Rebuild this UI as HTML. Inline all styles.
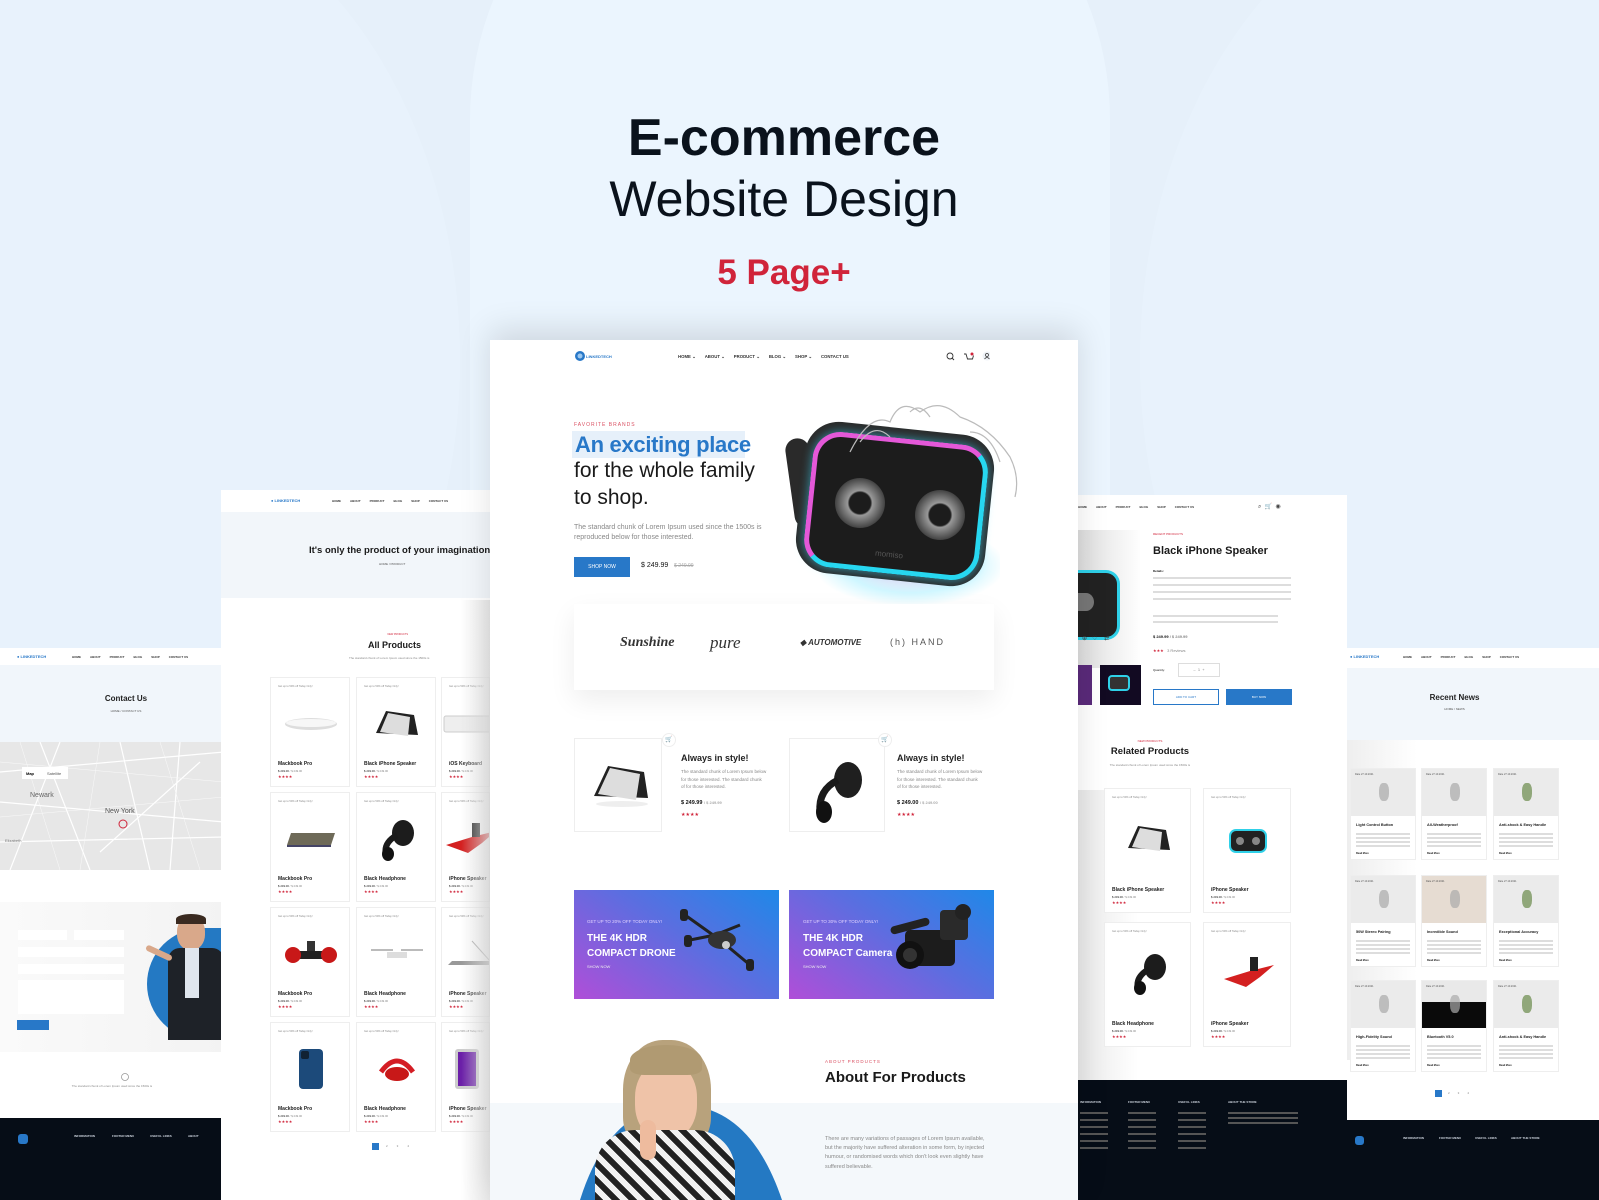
<!DOCTYPE html>
<html style="width:1599px;height:1200px;overflow:hidden"><head><meta charset="utf-8">
<style>
*{margin:0;padding:0;box-sizing:border-box}
html,body{width:1599px;height:1200px;overflow:hidden}
body{position:relative;background:#e6f0fa;font-family:"Liberation Sans",sans-serif;color:#111}
.a{position:absolute}
.pg{position:absolute;background:#fff;overflow:hidden}
.nav{position:absolute;font-size:4px;color:#333;white-space:nowrap;font-weight:bold}
.nav span{margin-right:9px}
.t{position:absolute;white-space:nowrap}
.gray{color:#888}
.red{color:#d0243a}
.card{position:absolute;background:#fff;border:1px solid #eee}
.stars{color:#d0243a;letter-spacing:0}
.foot{position:absolute;background:#060d17;color:#cfd6e0}
#bg{position:absolute;left:0;top:0;width:1599px;height:1200px;overflow:hidden}
</style></head><body>
<div id="bg">
<div class="a" style="left:470px;top:-200px;width:640px;height:1400px;border-radius:320px;background:#ebf5fe"></div>
<div class="a" style="left:-260px;top:-120px;width:720px;height:960px;border-radius:50%;background:#e8f2fc"></div>
<div class="a" style="left:1140px;top:-120px;width:720px;height:960px;border-radius:50%;background:#e8f2fc"></div>
</div>

<div class="t" style="left:0;width:1568px;text-align:center;top:108px;font-size:52px;font-weight:bold;color:#0a121c">E-commerce</div>
<div class="t" style="left:0;width:1568px;text-align:center;top:170px;font-size:50px;color:#0a121c">Website Design</div>
<div class="t" style="left:0;width:1568px;text-align:center;top:253px;font-size:35px;font-weight:bold;color:#d0243a">5 Page+</div>

<!-- far-left contact page -->
<div class="pg" style="left:0;top:648px;width:224px;height:552px">
  <div class="t" style="left:17px;top:6px;font-size:4px;color:#2878c8;font-weight:bold">● LINKEDTECH</div>
  <div class="nav" style="left:72px;top:7px;font-size:3px"><span>HOME</span><span>ABOUT</span><span>PRODUCT</span><span>BLOG</span><span>SHOP</span><span>CONTACT US</span></div>
  <div class="a" style="left:0;top:17px;width:224px;height:77px;background:#f1f6fb"></div>
  <div class="t" style="left:0;width:252px;text-align:center;top:46px;font-size:8px;font-weight:bold;color:#222">Contact Us</div>
  <div class="t" style="left:0;width:252px;text-align:center;top:61px;font-size:3px;color:#555">HOME / CONTACT US</div>
  <div class="a" style="left:0;top:94px;width:224px;height:128px;background:#e7e7e7">
    <svg width="224" height="128"><g stroke="#fff" stroke-width="1.2" fill="none"><path d="M0 30 L224 10M0 60 L224 80M40 0 L90 128M120 0 L150 128M180 0 L170 128M0 100 L224 95M60 0 L10 128M200 20 L100 110"/></g><g stroke="#fafafa" stroke-width=".5"><path d="M0 20 L224 40M0 75 L224 55M20 0 L60 128M100 0 L80 128M160 0 L200 128"/></g><rect x="22" y="25" width="46" height="12" fill="#fff"/><text x="26" y="33" font-size="4" font-weight="bold">Map</text><text x="47" y="33" font-size="4" fill="#555">Satellite</text><text x="30" y="55" font-size="7" fill="#666">Newark</text><text x="105" y="71" font-size="7" fill="#555">New York</text><text x="5" y="100" font-size="4" fill="#777">Elizabeth</text><circle cx="123" cy="82" r="4" fill="none" stroke="#d0243a"/></svg>
  </div>
  <div class="a" style="left:0;top:254px;width:224px;height:150px;background:linear-gradient(90deg,#fafafa,#f3f3f3)"></div>
  <div class="a" style="left:18px;top:282px;width:49px;height:10px;background:#fff"></div>
  <div class="a" style="left:74px;top:282px;width:50px;height:10px;background:#fff"></div>
  <div class="a" style="left:18px;top:299px;width:106px;height:10px;background:#fff"></div>
  <div class="a" style="left:18px;top:316px;width:106px;height:10px;background:#fff"></div>
  <div class="a" style="left:18px;top:332px;width:106px;height:34px;background:#fff"></div>
  <div class="a" style="left:17px;top:372px;width:32px;height:10px;background:#2878c8"></div>
  <div class="a" style="left:147px;top:280px;width:77px;height:112px;border-radius:56px 0 0 56px;background:#2479c3"></div>
  <div class="a" style="left:177px;top:268px;width:28px;height:34px;border-radius:45%;background:#d9a88a"></div>
  <div class="a" style="left:176px;top:266px;width:30px;height:10px;border-radius:50% 50% 0 0;background:#3a2a20"></div>
  <div class="a" style="left:168px;top:300px;width:56px;height:92px;border-radius:12px 12px 0 0;background:#1e2228"></div>
  <div class="a" style="left:185px;top:300px;width:14px;height:50px;background:#dfe6ee"></div>
  <div class="a" style="left:145px;top:302px;width:28px;height:6px;transform:rotate(25deg);background:#d9a88a;border-radius:3px"></div>
  <svg class="a" style="left:120px;top:424px" width="10" height="10"><circle cx="5" cy="5" r="3.5" fill="none" stroke="#999" stroke-width=".8"/></svg>
  <div class="t gray" style="left:0;width:224px;text-align:center;top:436px;font-size:3px">The standard chunk of Lorem Ipsum used since the 1500s is</div>
  <div class="foot" style="left:0;top:470px;width:224px;height:82px">
    <div class="a" style="left:18px;top:16px;width:10px;height:10px;background:#2878c8;border-radius:3px"></div>
    <div class="t" style="left:74px;top:16px;font-size:3px;font-weight:bold">INFORMATION</div>
    <div class="t" style="left:112px;top:16px;font-size:3px;font-weight:bold">FOOTER MENU</div>
    <div class="t" style="left:150px;top:16px;font-size:3px;font-weight:bold">USEFUL LINKS</div>
    <div class="t" style="left:188px;top:16px;font-size:3px;font-weight:bold">ABOUT</div>
  </div>
</div>

<!-- far-right news page -->
<div class="pg" id="np" style="left:1347px;top:648px;width:252px;height:552px">
  <div class="t" style="left:3px;top:6px;font-size:4px;color:#2878c8;font-weight:bold">● LINKEDTECH</div>
  <div class="nav" style="left:56px;top:7px;font-size:3px"><span>HOME</span><span>ABOUT</span><span>PRODUCT</span><span>BLOG</span><span>SHOP</span><span>CONTACT US</span></div>
  <div class="a" style="left:0;top:20px;width:252px;height:72px;background:#f1f6fb"></div>
  <div class="t" style="left:0;width:215px;text-align:center;top:45px;font-size:8px;font-weight:bold;color:#222">Recent News</div>
  <div class="t" style="left:0;width:215px;text-align:center;top:59px;font-size:3px;color:#555">HOME / NEWS</div>
  <div class="a" style="left:0;top:92px;width:70px;height:320px;background:linear-gradient(90deg,#eee,#fff)"></div>
</div>

<!-- left product page -->
<div class="pg" id="lp" style="left:221px;top:490px;width:269px;height:710px">
  <div class="t" style="left:50px;top:8px;font-size:4px;color:#2878c8;font-weight:bold">● LINKEDTECH</div>
  <div class="nav" style="left:111px;top:9px;font-size:3px"><span>HOME</span><span>ABOUT</span><span>PRODUCT</span><span>BLOG</span><span>SHOP</span><span>CONTACT US</span></div>
  <div class="a" style="left:0;top:22px;width:269px;height:86px;background:#f2f6fa"></div>
  <div class="t" style="left:88px;top:55px;font-size:9.5px;font-weight:bold;color:#1a1a1a">It's only the product of your imagination</div>
  <div class="t" style="left:158px;top:72px;font-size:3px;color:#555">HOME / PRODUCT</div>
  <div class="t red" style="left:0;width:269px;text-align:right;padding-right:82px;top:143px;font-size:2.5px">NEW PRODUCTS</div>
  <div class="t" style="left:147px;top:150px;font-size:9px;font-weight:bold;color:#1a1a1a">All Products</div>
  <div class="t gray" style="left:128px;top:166px;font-size:3px">The standard chunk of Lorem Ipsum used since the 1500s is</div>
</div>

<!-- right detail page -->
<div class="pg" id="rp" style="left:1078px;top:495px;width:269px;height:705px">
  <div class="nav" style="left:0;top:10px;font-size:3px"><span>HOME</span><span>ABOUT</span><span>PRODUCT</span><span>BLOG</span><span>SHOP</span><span>CONTACT US</span></div>
  <div class="t" style="left:180px;top:8px;font-size:6px;color:#444">⌕ &nbsp;🛒&nbsp; ◉</div>
  <div class="a" style="left:0;top:35px;width:63px;height:138px;background:linear-gradient(90deg,#ddd,#fff)"></div>
  <div class="a" style="left:0;top:75px;width:42px;height:70px;border-radius:0 14px 14px 0;background:#222;border:3px solid #2fd0e8;border-left:0"></div>
  <div class="a" style="left:0;top:98px;width:16px;height:18px;border-radius:0 50% 50% 0;background:#777"></div>
  <div class="t" style="left:4px;top:140px;font-size:6px;color:#444">⊕ &nbsp; ♡ &nbsp;&nbsp; ⇄</div>
  <div class="a" style="left:0;top:170px;width:14px;height:40px;background:#5a2a7a"></div>
  <div class="a" style="left:22px;top:170px;width:41px;height:40px;background:#120a22"></div>
  <div class="a" style="left:30px;top:180px;width:22px;height:16px;border:2px solid #2fd0e8;border-radius:4px;background:#333"></div>
  <div class="t red" style="left:75px;top:37px;font-size:3px">RECENT PRODUCTS</div>
  <div class="t" style="left:75px;top:50px;font-size:11px;font-weight:bold;color:#1a1a1a">Black iPhone Speaker</div>
  <div class="t" style="left:75px;top:74px;font-size:3px;font-weight:bold">Details:</div>
  <div class="a" style="left:75px;top:82px;width:138px;height:2px;background:#ddd;box-shadow:0 7px 0 #ddd,0 14px 0 #ddd,0 21px 0 #ddd"></div>
  <div class="a" style="left:75px;top:120px;width:125px;height:2px;background:#ddd;box-shadow:0 6px 0 #ddd"></div>
  <div class="t" style="left:75px;top:139px;font-size:4px;font-weight:bold">$ 249.99 <span class="gray">/ $ 249.99</span></div>
  <div class="t stars" style="left:75px;top:153px;font-size:4px">★★★ <span class="gray">&nbsp; 3 Reviews</span></div>
  <div class="t" style="left:75px;top:173px;font-size:3px">Quantity:</div>
  <div class="a" style="left:100px;top:168px;width:42px;height:14px;border:1px solid #ddd;font-size:4px;color:#888;text-align:center;line-height:12px">–&nbsp; 1 &nbsp;+</div>
  <div class="a" style="left:75px;top:194px;width:66px;height:16px;border:1px solid #2878c8;font-size:3px;color:#2878c8;text-align:center;line-height:14px">ADD TO CART</div>
  <div class="a" style="left:148px;top:194px;width:66px;height:16px;background:#2878c8;font-size:3px;color:#fff;text-align:center;line-height:16px">BUY NOW</div>
  <div class="t red" style="left:0;width:144px;text-align:center;top:244px;font-size:3px">NEW PRODUCTS</div>
  <div class="t" style="left:0;width:144px;text-align:center;top:251px;font-size:9.5px;font-weight:bold;color:#1a1a1a">Related Products</div>
  <div class="t gray" style="left:0;width:144px;text-align:center;top:268px;font-size:3px">The standard chunk of Lorem Ipsum used since the 1500s is</div>
  <div class="a" style="left:0;top:295px;width:60px;height:290px;background:linear-gradient(90deg,#e9e9e9,#fff)"></div>
  <div class="foot" style="left:0;top:585px;width:269px;height:120px">
    <div class="t" style="left:2px;top:20px;font-size:3px;font-weight:bold">INFORMATION</div>
    <div class="t" style="left:50px;top:20px;font-size:3px;font-weight:bold">FOOTER MENU</div>
    <div class="t" style="left:100px;top:20px;font-size:3px;font-weight:bold">USEFUL LINKS</div>
    <div class="t" style="left:150px;top:20px;font-size:3px;font-weight:bold">ABOUT THE STORE</div>
    <div class="a" style="left:2px;top:32px;width:28px;height:2px;background:#555;box-shadow:0 7px 0 #555,0 14px 0 #555,0 21px 0 #555,0 28px 0 #555,0 35px 0 #555,48px 0 0 #555,48px 7px 0 #555,48px 14px 0 #555,48px 21px 0 #555,48px 28px 0 #555,48px 35px 0 #555,98px 0 0 #555,98px 7px 0 #555,98px 14px 0 #555,98px 21px 0 #555,98px 28px 0 #555,98px 35px 0 #555"></div>
    <div class="a" style="left:150px;top:32px;width:70px;height:2px;background:#555;box-shadow:0 5px 0 #555,0 10px 0 #555"></div>
  </div>
</div>

<!-- center page -->
<div class="pg" style="left:490px;top:340px;width:588px;height:860px;box-shadow:0 -10px 30px rgba(0,0,0,.12)">
  <svg class="a" style="left:84px;top:10px" width="12" height="12"><circle cx="6" cy="6" r="5" fill="#2878c8"/><circle cx="6" cy="6" r="2.5" fill="#9cc8f0"/></svg>
  <div class="t" style="left:96px;top:14px;font-size:4px;color:#2878c8;font-weight:bold">LINKEDTECH</div>
  <div class="nav" style="left:188px;top:14px;font-size:4.3px;color:#333"><span>HOME ⌄</span><span>ABOUT ⌄</span><span>PRODUCT ⌄</span><span>BLOG ⌄</span><span>SHOP ⌄</span><span>CONTACT US</span></div>
  <svg class="a" style="left:455px;top:11px" width="45" height="12"><circle cx="5" cy="5" r="3" fill="none" stroke="#333" stroke-width=".9"/><path d="M7 7 L9 9" stroke="#333"/><path d="M19 3 h2 l1.5 5 h5 l1 -3.5" fill="none" stroke="#333" stroke-width=".9"/><circle cx="27" cy="3" r="1.5" fill="#d0243a"/><circle cx="42" cy="5" r="4.5" fill="#eef2f7"/><circle cx="42" cy="4" r="1.5" fill="none" stroke="#333" stroke-width=".7"/><path d="M39.5 8 q2.5 -3 5 0" fill="none" stroke="#333" stroke-width=".7"/></svg>
  <div class="t red" style="left:84px;top:82px;font-size:5px;letter-spacing:1px;opacity:.8">FAVORITE BRANDS</div>
  <div class="a" style="left:82px;top:91px;width:173px;height:27px;background:#e6f0fa"></div>
  <div class="t" style="left:85px;top:92px;font-size:22px;color:#2878c8;font-weight:bold;letter-spacing:-.3px">An exciting place</div>
  <div class="t" style="left:84px;top:119px;font-size:21px;color:#1a1a1a">for the whole family</div>
  <div class="t" style="left:84px;top:146px;font-size:21px;color:#1a1a1a">to shop.</div>
  <div class="t gray" style="left:84px;top:183px;font-size:7px;line-height:10px">The standard chunk of Lorem Ipsum used since the 1500s is<br>reproduced below for those interested.</div>
  <div class="a" style="left:84px;top:217px;width:56px;height:20px;background:#2878c8;color:#fff;font-size:5px;text-align:center;line-height:20px">SHOP NOW</div>
  <div class="t" style="left:151px;top:222px;font-size:7px">$ 249.99 &nbsp; <span style="color:#aaa;font-size:5px;text-decoration:line-through">$ 249.99</span></div>
  <div class="a" style="left:330px;top:200px;width:180px;height:64px;background:radial-gradient(ellipse at 50% 40%,rgba(255,150,220,.5),rgba(120,230,255,.35) 50%,rgba(255,255,255,0) 75%)"></div>
  <div class="a" style="left:300px;top:98px;width:24px;height:90px;border-radius:12px;background:#2a2a2a;transform:rotate(-8deg)"></div>
  <div class="a" style="left:310px;top:88px;width:190px;height:152px;border-radius:34px;background:#2b2b2b;transform:rotate(6deg)"></div>
  <div class="a" style="left:318px;top:98px;width:176px;height:136px;border-radius:28px;background:#1c1c1c;border:5px solid;border-color:#e458d8 #27d7f0 #27d7f0 #e458d8;transform:rotate(6deg);box-shadow:0 0 10px rgba(60,220,255,.6)"></div>
  <div class="a" style="left:345px;top:138px;width:50px;height:50px;border-radius:50%;background:radial-gradient(circle,#1c1c1c 30%,#999 35%,#444 70%)"></div>
  <div class="a" style="left:425px;top:150px;width:50px;height:50px;border-radius:50%;background:radial-gradient(circle,#1c1c1c 30%,#999 35%,#444 70%)"></div>
  <div class="t" style="left:385px;top:210px;font-size:8px;color:#555;transform:rotate(6deg)">momiso</div>
  <svg class="a" style="left:340px;top:52px" width="200" height="110"><g fill="none" stroke="#bbb" stroke-width="1.2"><path d="M20 60 q20 -40 40 -30 q10 -25 30 -10 q20 -15 40 5 q30 10 50 40 q10 20 5 40"/><path d="M30 50 q15 -20 30 -5 M80 20 q10 -10 20 5 M140 40 q20 0 30 30"/></g></svg>
  <div class="a" style="left:84px;top:264px;width:420px;height:86px;background:#fff;box-shadow:0 10px 25px rgba(0,0,0,.07)"></div>
  <div class="t" style="left:130px;top:295px;font-size:14px;font-style:italic;font-family:'Liberation Serif',serif;font-weight:bold;color:#333">Sunshine</div>
  <div class="t" style="left:220px;top:293px;font-size:17px;font-style:italic;font-family:'Liberation Serif',serif;color:#333">pure</div>
  <div class="t" style="left:310px;top:298px;font-size:8px;font-style:italic;font-weight:bold;color:#333">◆ AUTOMOTIVE</div>
  <div class="t" style="left:400px;top:297px;font-size:9px;color:#555;letter-spacing:2px">(h) HAND</div>
  <div class="card" style="left:84px;top:398px;width:88px;height:94px"></div>
  <div class="a" style="left:172px;top:393px;width:14px;height:14px;border-radius:50%;background:#fff;border:1px solid #eee;font-size:6px;text-align:center;line-height:12px">🛒</div>
  <svg class="a" style="left:98px;top:418px" width="62" height="50"><path d="M6 38 L20 8 L56 14 L60 40 Z" fill="#222"/><path d="M10 36 L22 10 L52 16 L48 42 Z" fill="#ddd"/><ellipse cx="34" cy="46" rx="26" ry="3" fill="#eee"/></svg>
  <div class="t" style="left:191px;top:413px;font-size:9px;font-weight:bold;color:#222">Always in style!</div>
  <div class="t gray" style="left:191px;top:428px;font-size:4.5px;line-height:7.5px">The standard chunk of Lorem Ipsum below<br>for those interested. The standard chunk<br>of for those interested.</div>
  <div class="t" style="left:191px;top:460px;font-size:5.5px;font-weight:bold">$ 249.99 <span style="color:#aaa;font-size:4px">/ $ 249.99</span></div>
  <div class="t stars" style="left:191px;top:472px;font-size:5px">★★★★</div>
  <div class="card" style="left:299px;top:398px;width:96px;height:94px"></div>
  <div class="a" style="left:388px;top:393px;width:14px;height:14px;border-radius:50%;background:#fff;border:1px solid #eee;font-size:6px;text-align:center;line-height:12px">🛒</div>
  <svg class="a" style="left:318px;top:410px" width="60" height="75"><ellipse cx="40" cy="30" rx="14" ry="18" fill="#1f1f1f"/><path d="M30 30 Q10 40 12 62" stroke="#1a1a1a" stroke-width="7" fill="none"/><ellipse cx="16" cy="62" rx="8" ry="11" fill="#111"/></svg>
  <div class="t" style="left:407px;top:413px;font-size:9px;font-weight:bold;color:#222">Always in style!</div>
  <div class="t gray" style="left:407px;top:428px;font-size:4.5px;line-height:7.5px">The standard chunk of Lorem Ipsum below<br>for those interested. The standard chunk<br>of for those interested.</div>
  <div class="t" style="left:407px;top:460px;font-size:5.5px;font-weight:bold">$ 249.00 <span style="color:#aaa;font-size:4px">/ $ 249.00</span></div>
  <div class="t stars" style="left:407px;top:472px;font-size:5px">★★★★</div>
  <div class="a" style="left:84px;top:550px;width:205px;height:109px;background:linear-gradient(35deg,#b04ed8,#5b6ee0 55%,#1f88e8)"></div>
  <div class="t" style="left:97px;top:579px;font-size:4.5px;color:#e0d0ff">GET UP TO 20% OFF TODAY ONLY!</div>
  <div class="t" style="left:97px;top:591px;font-size:10px;color:#fff;font-weight:bold;line-height:15px">THE 4K HDR<br>COMPACT DRONE</div>
  <div class="t" style="left:97px;top:624px;font-size:4px;color:#eee">SHOW NOW</div>
  <svg class="a" style="left:180px;top:555px" width="100" height="80"><g stroke="#222" stroke-width="3" fill="none"><path d="M15 20 L50 45 L80 70M20 45 L45 40 L70 30"/></g><ellipse cx="52" cy="45" rx="14" ry="9" fill="#333"/><circle cx="56" cy="50" r="4" fill="#ccc"/><rect x="10" y="14" width="8" height="12" rx="3" fill="#222"/><rect x="14" y="40" width="8" height="12" rx="3" fill="#222"/><rect x="76" y="64" width="8" height="12" rx="3" fill="#222"/></svg>
  <div class="a" style="left:299px;top:550px;width:205px;height:109px;background:linear-gradient(35deg,#b04ed8,#5b6ee0 55%,#1f88e8)"></div>
  <div class="t" style="left:313px;top:579px;font-size:4.5px;color:#e0d0ff">GET UP TO 30% OFF TODAY ONLY!</div>
  <div class="t" style="left:313px;top:591px;font-size:10px;color:#fff;font-weight:bold;line-height:15px">THE 4K HDR<br>COMPACT Camera</div>
  <div class="t" style="left:313px;top:624px;font-size:4px;color:#eee">SHOW NOW</div>
  <svg class="a" style="left:395px;top:560px" width="100" height="80"><rect x="20" y="30" width="50" height="36" rx="5" fill="#1c1c1c"/><circle cx="25" cy="55" r="14" fill="#111"/><circle cx="25" cy="55" r="7" fill="#333"/><rect x="5" y="22" width="40" height="8" rx="4" fill="#222" transform="rotate(-15 25 26)"/><rect x="55" y="10" width="28" height="30" rx="4" fill="#2a2a2a"/><circle cx="78" cy="12" r="8" fill="#222"/></svg>
  <div class="a" style="left:0;top:763px;width:588px;height:97px;background:#f4f8fb"></div>
  <svg class="a" style="left:80px;top:760px" width="220" height="100"><path d="M10 100 Q40 5 110 5 Q180 5 212 100 Z" fill="#2479c3"/></svg>
  <div class="a" style="left:133px;top:700px;width:88px;height:110px;border-radius:45% 45% 30% 30%;background:#b8a27c"></div>
  <div class="a" style="left:145px;top:722px;width:62px;height:78px;border-radius:45%;background:#efc3a8"></div>
  <div class="a" style="left:140px;top:705px;width:72px;height:30px;border-radius:50% 50% 20% 20%;background:#b09a72"></div>
  <div class="a" style="left:105px;top:790px;width:140px;height:70px;border-radius:40px 40px 0 0;background:repeating-linear-gradient(45deg,#222 0 6px,#f2f2f2 6px 12px)"></div>
  <div class="a" style="left:150px;top:780px;width:16px;height:40px;border-radius:8px;background:#eebb9e"></div>
  <div class="t red" style="left:335px;top:719px;font-size:4.5px;letter-spacing:1px;opacity:.8">ABOUT PRODUCTS</div>
  <div class="t" style="left:335px;top:729px;font-size:15px;font-weight:bold;color:#1a1a1a">About For Products</div>
  <div class="t gray" style="left:335px;top:795px;font-size:5.5px;line-height:9.2px">There are many variations of passages of Lorem Ipsum available,<br>but the majority have suffered alteration in some form, by injected<br>humour, or randomised words which don't look even slightly have<br>suffered believable.</div>
</div>

<script>
function card(x,y,w,h,title,img){return '<div class="card" style="left:'+x+'px;top:'+y+'px;width:'+w+'px;height:'+h+'px;overflow:hidden">'+'<div class="t gray" style="left:7px;top:7px;font-size:2.6px">Get up to 50% off Today Only!</div>'+'<div class="a" style="left:0;top:16px;width:'+w+'px;height:'+(h*0.55)+'px;display:flex;align-items:center;justify-content:center">'+img+'</div>'+'<div class="t" style="left:7px;top:'+(h-27)+'px;font-size:5px;font-weight:bold;color:#222">'+title+'</div>'+'<div class="t" style="left:7px;top:'+(h-19)+'px;font-size:2.8px">$ 249.00 <span class="gray">/ $ 249.00</span></div>'+'<div class="t stars" style="left:7px;top:'+(h-14)+'px;font-size:4px">★★★★</div></div>'}
var I={
spk:'<svg width="50" height="34"><path d="M4 26 L14 4 L42 8 L46 28 Z" fill="#222"/><path d="M8 25 L16 6 L38 10 L36 29 Z" fill="#ddd"/></svg>',
hp:'<svg width="40" height="44"><ellipse cx="26" cy="16" rx="11" ry="13" fill="#1c1c1c"/><path d="M20 18 Q6 26 9 38" stroke="#1a1a1a" stroke-width="6" fill="none"/><ellipse cx="11" cy="37" rx="6" ry="7" fill="#111"/></svg>',
mouse:'<svg width="56" height="18"><ellipse cx="28" cy="9" rx="26" ry="6" fill="#ddd"/><ellipse cx="28" cy="8" rx="25" ry="4" fill="#f7f7f7"/></svg>',
kb:'<svg width="56" height="24"><rect x="2" y="4" width="52" height="16" rx="2" fill="#eee" stroke="#ccc"/></svg>',
mac:'<svg width="56" height="20"><path d="M8 4 L52 4 L48 16 L4 16 Z" fill="#6e6a58"/><path d="M4 16 L48 16 L48 18 L4 18 Z" fill="#446"/></svg>',
red:'<svg width="56" height="36"><path d="M4 24 L30 16 L54 10 L40 22 L26 32 Z" fill="#d42020"/><rect x="30" y="2" width="8" height="14" fill="#222"/></svg>',
dock:'<svg width="56" height="30"><rect x="10" y="12" width="36" height="8" fill="#222"/><circle cx="10" cy="16" r="8" fill="#c81818"/><circle cx="46" cy="16" r="8" fill="#c81818"/><rect x="24" y="2" width="8" height="10" fill="#333"/></svg>',
drone:'<svg width="56" height="16"><rect x="18" y="6" width="20" height="6" fill="#ddd"/><path d="M2 4 H24 M32 4 H54" stroke="#bbb" stroke-width="2"/></svg>',
lap:'<svg width="56" height="30"><path d="M10 22 L50 22 L54 26 L6 26 Z" fill="#999"/><path d="M30 2 L48 22" stroke="#aaa"/></svg>',
phone:'<svg width="30" height="44"><rect x="3" y="2" width="24" height="40" rx="4" fill="#1c4a7a"/><rect x="5" y="4" width="8" height="8" rx="2" fill="#123"/></svg>',
redhp:'<svg width="44" height="30"><path d="M6 18 Q22 -4 38 18" stroke="#d41d24" stroke-width="5" fill="none"/><ellipse cx="22" cy="20" rx="12" ry="7" fill="#c81818"/></svg>',
ipad:'<svg width="30" height="44"><rect x="3" y="2" width="24" height="40" rx="3" fill="#ccc"/><rect x="6" y="5" width="18" height="34" fill="#6b1fa8"/></svg>',
spk2:'<svg width="44" height="34"><rect x="4" y="8" width="36" height="22" rx="6" fill="#222" stroke="#2fd0e8" stroke-width="2"/><circle cx="14" cy="19" r="4" fill="#888"/><circle cx="30" cy="19" r="4" fill="#888"/></svg>'};
var h='',L=221,T=490,xs=[270,356,441],ys=[677,792,907,1022];
var data=[[['Mackbook Pro','mouse'],['Black iPhone Speaker','spk'],['iOS Keyboard','kb']],[['Mackbook Pro','mac'],['Black Headphone','hp'],['iPhone Speaker','red']],[['Mackbook Pro','dock'],['Black Headphone','drone'],['iPhone Speaker','lap']],[['Mackbook Pro','phone'],['Black Headphone','redhp'],['iPhone Speaker','ipad']]];
for(var r=0;r<4;r++)for(var c=0;c<3;c++){var w=(c==2)?48:80;h+=card(xs[c]-L,ys[r]-T,c==2?49:80,110,data[r][c][0],I[data[r][c][1]])}
h+='<div class="a" style="left:151px;top:653px;width:7px;height:7px;background:#2878c8"></div><div class="t gray" style="left:165px;top:654px;font-size:3px;letter-spacing:9px">234</div>';
h+='<div class="a" style="left:240px;top:110px;width:29px;height:600px;background:linear-gradient(90deg,rgba(240,240,240,0),rgba(225,225,225,.8))"></div>';
document.getElementById('lp').insertAdjacentHTML('beforeend',h);
var h2='';
h2+=card(1104-1078,788-495,87,125,'Black iPhone Speaker',I.spk);
h2+=card(1203-1078,788-495,88,125,'iPhone Speaker',I.spk2);
h2+=card(1104-1078,922-495,87,125,'Black Headphone',I.hp);
h2+=card(1203-1078,922-495,88,125,'iPhone Speaker',I.red);
document.getElementById('rp').insertAdjacentHTML('beforeend',h2);
var np=document.getElementById('np');
var nx=[1350,1421,1493],ny=[768,875,980];
var titles=[['Light Control Button','All-Weatherproof','Anti-shock & Easy Handle'],['50W Stereo Pairing','Incredible Sound','Exceptional Accuracy'],['High-Fidelity Sound','Bluetooth V5.0','Anti-shock & Easy Handle']];
var h3='';
for(var r=0;r<3;r++)for(var c=0;c<3;c++){var x=nx[c]-1347,y=ny[r]-648;var bg=(r==2&&c==1)?'linear-gradient(#e9e9e9 45%,#0a0a0a 45%)':(r==1&&c==1?'#e6dcd2':'#ebebeb');
h3+='<div class="card" style="left:'+x+'px;top:'+y+'px;width:66px;height:92px;overflow:hidden"><div class="a" style="left:0;top:0;width:66px;height:47px;background:'+bg+'"></div><div class="t" style="left:4px;top:4px;font-size:2.5px;color:#555">Date 27.10.2021</div><div class="a" style="left:28px;top:14px;width:10px;height:18px;border-radius:40%;background:'+(c==2?'#6a8a4a':'#aaa')+';opacity:.7"></div><div class="t" style="left:5px;top:54px;font-size:3.8px;font-weight:bold;color:#222">'+titles[r][c]+'</div><div class="a" style="left:5px;top:64px;width:54px;height:1.5px;background:#ddd;box-shadow:0 4px 0 #ddd,0 8px 0 #ddd,0 12px 0 #ddd"></div><div class="t" style="left:5px;top:83px;font-size:2.5px;font-weight:bold">Read More</div></div>'}
h3+='<div class="a" style="left:88px;top:442px;width:7px;height:7px;background:#2878c8"></div><div class="t gray" style="left:101px;top:443px;font-size:3px;letter-spacing:8px">234</div>';
h3+='<div class="foot" style="left:0;top:472px;width:252px;height:80px"><div class="a" style="left:8px;top:16px;width:9px;height:9px;background:#2878c8;border-radius:3px"></div><div class="t" style="left:56px;top:16px;font-size:3px;font-weight:bold">INFORMATION</div><div class="t" style="left:92px;top:16px;font-size:3px;font-weight:bold">FOOTER MENU</div><div class="t" style="left:128px;top:16px;font-size:3px;font-weight:bold">USEFUL LINKS</div><div class="t" style="left:164px;top:16px;font-size:3px;font-weight:bold">ABOUT THE STORE</div></div>';
np.insertAdjacentHTML('beforeend',h3);
</script>
</body></html>
